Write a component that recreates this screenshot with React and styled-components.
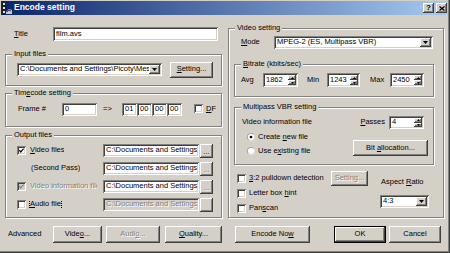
import React from 'react';
import styled, { createGlobalStyle, css } from 'styled-components';

const face = '#d4d0c8';

const GlobalStyle = createGlobalStyle`
  html, body { margin: 0; padding: 0; background: ${face}; }
  body {
    font-family: "Liberation Sans", Arial, sans-serif;
    font-size: 7.5px;
    line-height: 1.15;
    color: #000;
  }
  * { box-sizing: border-box; }
`;

const raised = css`
  background: ${face};
  box-shadow: inset -1px -1px #404040, inset 1px 1px #fff, inset -2px -2px #808080, inset 2px 2px ${face};
`;

const sunken = css`
  box-shadow: inset 1px 1px #808080, inset -1px -1px #fff, inset 2px 2px #404040, inset -2px -2px ${face};
`;

const spacing = css`
  margin-top: ${p => p.$mt || 0}px;
  margin-left: ${p => (p.$push ? 'auto' : `${p.$ml || 0}px`)};
  margin-right: ${p => p.$mr || 0}px;
`;

const disabledText = css`
  color: #808080;
  text-shadow: 1px 1px 0 #fff;
`;

const Window = styled.div`
  width: 450px;
  height: 253px;
  background: ${face};
  padding: 1px 2px 3px 1px;
  display: flex;
  flex-direction: column;
  box-shadow: inset -1px -1px #404040, inset -2px -2px #808080;
  overflow: hidden;
`;

const TitleBar = styled.div`
  flex: none;
  height: 14px;
  background: linear-gradient(to right, #0a246a, #a6caf0);
  display: flex;
  align-items: center;
  padding: 0 1px;
`;

const TitleText = styled.span`
  flex: 1;
  color: #fff;
  font-weight: bold;
  font-size: 8.5px;
  margin-left: 2px;
  white-space: nowrap;
`;

const CaptionButtons = styled.div`
  display: flex;
  gap: 2px;
`;

const CaptionButton = styled.div`
  width: 11px;
  height: 10px;
  ${raised};
  display: flex;
  align-items: center;
  justify-content: center;
  font-weight: bold;
  font-size: 8px;
  line-height: 1;
`;

const Body = styled.div`
  display: grid;
  grid-template-columns: 217px 216px;
  column-gap: 6px;
  padding-left: 4px;
  align-items: start;
`;

const Column = styled.div`
  display: flex;
  flex-direction: column;
`;

const Group = styled.div`
  position: relative;
  flex: none;
  width: ${p => (p.$w ? `${p.$w}px` : 'auto')};
  height: ${p => p.$h}px;
  ${spacing};
  border: 1px solid #808080;
  box-shadow: inset 1px 1px #fff, 1px 1px #fff;
  padding: ${p => p.$pad || 0};
  display: flex;
  flex-direction: column;
  gap: ${p => p.$gap || 0}px;
`;

const Legend = styled.span`
  position: absolute;
  top: -6px;
  left: 6px;
  padding: 0 2px;
  background: ${face};
  line-height: 10px;
  white-space: nowrap;
`;

const Row = styled.div`
  display: flex;
  align-items: ${p => p.$align || 'center'};
  height: ${p => (p.$h ? `${p.$h}px` : 'auto')};
  padding-left: ${p => p.$pl || 0}px;
  gap: ${p => p.$gap || 0}px;
  ${spacing};
`;

const Text = styled.span`
  flex: ${p => (p.$grow ? 1 : 'none')};
  width: ${p => (p.$w ? `${p.$w}px` : 'auto')};
  padding-left: ${p => p.$pl || 0}px;
  white-space: nowrap;
  overflow: hidden;
  ${spacing};
  ${p => p.$disabled && disabledText};
  ${p => p.$focus && css`outline: 1px dotted #000; outline-offset: 0;`};
`;

const U = styled.span`
  text-decoration: underline;
`;

const Field = styled.div`
  flex: none;
  width: ${p => p.$w}px;
  height: ${p => p.$h || 13}px;
  background: ${p => (p.$disabled ? face : '#fff')};
  ${sunken};
  padding: 2px;
  display: flex;
  align-items: stretch;
  ${spacing};
`;

const FieldText = styled.span`
  flex: 1;
  min-width: 0;
  overflow: hidden;
  white-space: nowrap;
  display: flex;
  align-items: center;
  padding-left: 1px;
  ${p => p.$disabled && disabledText};
`;

const DropButton = styled.span`
  flex: none;
  width: 11px;
  ${raised};
  display: flex;
  align-items: center;
  justify-content: center;
`;

const SpinButtons = styled.span`
  flex: none;
  width: 8px;
  display: flex;
  flex-direction: column;
`;

const SpinHalf = styled.span`
  flex: 1;
  ${raised};
  display: flex;
  align-items: center;
  justify-content: center;
`;

const ButtonFace = styled.div`
  flex: none;
  width: ${p => p.$w}px;
  height: ${p => p.$h || 16}px;
  ${raised};
  ${p =>
    p.$default &&
    css`
      box-shadow: inset 0 0 0 1px #000, inset -2px -2px #404040, inset 2px 2px #fff, inset -3px -3px #808080;
    `};
  display: flex;
  align-items: ${p => (p.$dots ? 'flex-end' : 'center')};
  padding-bottom: ${p => (p.$dots ? 2 : 0)}px;
  justify-content: center;
  white-space: nowrap;
  line-height: ${p => (p.$dots ? 1 : 'inherit')};
  ${spacing};
  ${p => p.$disabled && disabledText};
`;

const ButtonLabel = styled.span`
  white-space: nowrap;
`;

const Button = ({ children, ...rest }) => (
  <ButtonFace {...rest}>
    <ButtonLabel>{children}</ButtonLabel>
  </ButtonFace>
);

const CheckBox = styled.span`
  flex: none;
  width: 9px;
  height: 9px;
  ${sunken};
  background: ${p => (p.$disabled ? face : '#fff')};
  display: inline-flex;
  align-items: center;
  justify-content: center;
`;

const FileRow = styled.div`
  display: flex;
  align-items: center;
  height: 13px;
`;

const FileLabel = styled.div`
  flex: none;
  width: 80px;
  margin-right: 6px;
  display: flex;
  align-items: center;
  gap: 4px;
  overflow: hidden;
  padding-left: ${p => p.$pl || 0}px;
`;

const RadioColumn = styled.div`
  display: flex;
  flex-direction: column;
  gap: 4px;
  padding-left: 5px;
`;

const RadioRow = styled.div`
  display: flex;
  align-items: center;
  gap: 3px;
  height: 10px;
`;

const OptionRow = styled.div`
  display: flex;
  align-items: center;
  gap: 3px;
  height: 14px;
`;

const OptionsArea = styled.div`
  display: flex;
  margin-top: 6px;
  padding-left: 3px;
`;

const OptionColumn = styled.div`
  width: 131px;
  display: flex;
  flex-direction: column;
  gap: 1px;
`;

const AspectColumn = styled.div`
  display: flex;
  flex-direction: column;
  margin-left: 12px;
`;

const Footer = styled.div`
  display: flex;
  align-items: center;
  height: 17px;
  margin-top: 8px;
  padding-left: 7px;
`;

const DownArrow = () => (
  <svg width="5" height="3" viewBox="0 0 5 3">
    <polygon points="0,0 5,0 2.5,3" fill="#000" />
  </svg>
);

const Combo = ({ w, h, disabled, children, ...rest }) => (
  <Field $w={w} $h={h} $disabled={disabled} {...rest}>
    <FieldText $disabled={disabled}>{children}</FieldText>
    <DropButton>
      <DownArrow />
    </DropButton>
  </Field>
);

const Spin = ({ w, h, children, ...rest }) => (
  <Field $w={w} $h={h} {...rest}>
    <FieldText>{children}</FieldText>
    <SpinButtons>
      <SpinHalf>
        <svg width="3" height="2" viewBox="0 0 3 2">
          <polygon points="0,2 3,2 1.5,0" fill="#000" />
        </svg>
      </SpinHalf>
      <SpinHalf>
        <svg width="3" height="2" viewBox="0 0 3 2">
          <polygon points="0,0 3,0 1.5,2" fill="#000" />
        </svg>
      </SpinHalf>
    </SpinButtons>
  </Field>
);

const Edit = ({ w, h, disabled, children, ...rest }) => (
  <Field $w={w} $h={h} $disabled={disabled} {...rest}>
    <FieldText $disabled={disabled}>{children}</FieldText>
  </Field>
);

const Check = ({ checked, disabled }) => (
  <CheckBox $disabled={disabled}>
    {checked && (
      <svg width="5" height="5" viewBox="0 0 7 7">
        <path d="M0.5 3 L2.5 5.5 L6.5 0.8" stroke={disabled ? '#808080' : '#000'} strokeWidth="1.7" fill="none" />
      </svg>
    )}
  </CheckBox>
);

const Radio = ({ checked }) => (
  <svg width="8" height="8" viewBox="0 0 12 12" style={{ flex: 'none' }}>
    <circle cx="6" cy="6" r="5.5" fill="#fff" />
    <path d="M10 2 A5.6 5.6 0 0 0 2 10" stroke="#808080" strokeWidth="1.2" fill="none" />
    <path d="M2 10 A5.6 5.6 0 0 0 10 2" stroke={face} strokeWidth="1.2" fill="none" />
    {checked && <circle cx="6" cy="6" r="2" fill="#000" />}
  </svg>
);

const AppIcon = () => (
  <svg width="10" height="12" viewBox="0 0 10 12" style={{ flex: 'none' }}>
    <rect x="0" y="0" width="4" height="12" fill="#202020" />
    <rect x="1" y="1" width="2" height="2" fill="#e0e0e0" />
    <rect x="1" y="5" width="2" height="2" fill="#e0e0e0" />
    <rect x="1" y="9" width="2" height="2" fill="#e0e0e0" />
    <path d="M4 10 L7 7 L10 8 L10 12 L4 12 Z" fill="#c8c8c8" />
    <path d="M5 10 L7 8 L9 9" stroke="#404040" fill="none" />
  </svg>
);

export default function App() {
  return (
    <>
      <GlobalStyle />
      <Window>
        <TitleBar>
          <AppIcon />
          <TitleText>Encode setting</TitleText>
          <CaptionButtons>
            <CaptionButton>?</CaptionButton>
            <CaptionButton>
              <svg width="6" height="5" viewBox="0 0 6 5">
                <path d="M0.5 0.5 L5.5 4.5 M5.5 0.5 L0.5 4.5" stroke="#000" strokeWidth="1.3" />
              </svg>
            </CaptionButton>
          </CaptionButtons>
        </TitleBar>

        <Body>
          <Column>
            <Row $h={14} $mt={12}>
              <Text $w={48} $pl={9}>
                <U>T</U>itle
              </Text>
              <Edit w={165} h={14}>film.avs</Edit>
            </Row>

            <Group $mt={13} $h={32} $pad="6px 0 0 11px">
              <Legend>Input files</Legend>
              <Row $h={17} $gap={8}>
                <Combo w={145} h={13}>C:\Documents and Settings\Picoty\Mes</Combo>
                <Button $w={43} $h={16}>
                  <U>S</U>etting...
                </Button>
              </Row>
            </Group>

            <Group $mt={7} $h={34} $pad="9px 0 0 12px">
              <Legend>
                Tim<U>e</U>code setting
              </Legend>
              <Row $h={13}>
                <Text $w={44}>Frame #</Text>
                <Edit w={35}>0</Edit>
                <Text $w={25} $pl={6}>=&gt;</Text>
                <Edit w={15}>01</Edit>
                <Edit w={15}>00</Edit>
                <Edit w={15}>00</Edit>
                <Edit w={15}>00</Edit>
                <Text $ml={12}>
                  <Check />
                </Text>
                <Text $ml={3}>
                  <U>D</U>F
                </Text>
              </Row>
            </Group>

            <Group $mt={8} $h={83} $pad="8px 0 0 11px" $gap={5}>
              <Legend>Output files</Legend>
              <FileRow>
                <FileLabel>
                  <Check checked />
                  <Text>
                    <U>V</U>ideo files
                  </Text>
                </FileLabel>
                <Edit w={96}>C:\Documents and Settings</Edit>
                <Button $w={13} $h={14} $ml={1} $dots>
                  ...
                </Button>
              </FileRow>
              <FileRow>
                <FileLabel $pl={14}>
                  <Text>(Second Pass)</Text>
                </FileLabel>
                <Edit w={96}>C:\Documents and Settings</Edit>
                <Button $w={13} $h={14} $ml={1} $dots $disabled>
                  ...
                </Button>
              </FileRow>
              <FileRow>
                <FileLabel>
                  <Check checked disabled />
                  <Text $disabled>Video information file</Text>
                </FileLabel>
                <Edit w={96}>C:\Documents and Settings</Edit>
                <Button $w={13} $h={14} $ml={1} $dots $disabled>
                  ...
                </Button>
              </FileRow>
              <FileRow>
                <FileLabel>
                  <Check />
                  <Text $focus>
                    <U>A</U>udio file
                  </Text>
                </FileLabel>
                <Edit w={96} disabled>
                  C:\Documents and Settings
                </Edit>
                <Button $w={13} $h={14} $ml={1} $dots />
              </FileRow>
            </Group>
          </Column>

          <Column>
            <Group $mt={13} $h={190} $pad="7px 0 0 5px">
              <Legend>Video setting</Legend>
              <Row $h={13} $pl={7}>
                <Text $w={33}>
                  <U>M</U>ode
                </Text>
                <Combo w={159}>MPEG-2 (ES, Multipass VBR)</Combo>
              </Row>

              <Group $mt={15} $w={200} $h={33} $pad="8px 0 0 6px">
                <Legend>
                  <U>B</U>itrate (kbits/sec)
                </Legend>
                <Row $h={14}>
                  <Text $w={22}>Avg</Text>
                  <Spin w={35} h={14}>1862</Spin>
                  <Text $w={20} $ml={9}>
                    Min
                  </Text>
                  <Spin w={33} h={14}>1243</Spin>
                  <Text $w={20} $ml={10}>
                    Max
                  </Text>
                  <Spin w={34} h={14}>2450</Spin>
                </Row>
              </Group>

              <Group $mt={10} $w={200} $h={58} $pad="8px 0 0 7px">
                <Legend>Multipass VBR setting</Legend>
                <Row $h={13}>
                  <Text $grow>Video information file</Text>
                  <Text $mr={4}>
                    <U>P</U>asses
                  </Text>
                  <Spin w={35} $mr={9}>
                    4
                  </Spin>
                </Row>
                <Row $align="flex-end" $mt={3}>
                  <RadioColumn>
                    <RadioRow>
                      <Radio checked />
                      <Text>
                        Create <U>n</U>ew file
                      </Text>
                    </RadioRow>
                    <RadioRow>
                      <Radio />
                      <Text>
                        Use e<U>x</U>isting file
                      </Text>
                    </RadioRow>
                  </RadioColumn>
                  <Button $w={75} $h={16} $push $mr={5}>
                    Bit <U>a</U>llocation...
                  </Button>
                </Row>
              </Group>

              <OptionsArea>
                <OptionColumn>
                  <OptionRow>
                    <Check />
                    <Text>
                      <U>3</U>:2 pulldown detection
                    </Text>
                    <Button $w={37} $h={15} $push $disabled>
                      Setting...
                    </Button>
                  </OptionRow>
                  <OptionRow>
                    <Check />
                    <Text>
                      Letter box <U>h</U>int
                    </Text>
                  </OptionRow>
                  <OptionRow>
                    <Check />
                    <Text>
                      Pan<U>s</U>can
                    </Text>
                  </OptionRow>
                </OptionColumn>
                <AspectColumn>
                  <Text $mt={7} $pl={1}>
                    Aspect <U>R</U>atio
                  </Text>
                  <Combo w={49} $mt={8}>
                    4:3
                  </Combo>
                </AspectColumn>
              </OptionsArea>
            </Group>
          </Column>
        </Body>

        <Footer>
          <Text $w={45}>Advanced</Text>
          <Button $w={49} $h={17}>
            Vide<U>o</U>...
          </Button>
          <Button $w={54} $h={17} $ml={4} $disabled>
            Audi<U>o</U>...
          </Button>
          <Button $w={57} $h={17} $ml={5}>
            <U>Q</U>uality...
          </Button>
          <Button $w={75} $h={17} $ml={13}>
            Encode No<U>w</U>
          </Button>
          <Button $w={52} $h={17} $ml={24} $default>
            OK
          </Button>
          <Button $w={52} $h={17} $ml={3}>
            Cancel
          </Button>
        </Footer>
      </Window>
    </>
  );
}
